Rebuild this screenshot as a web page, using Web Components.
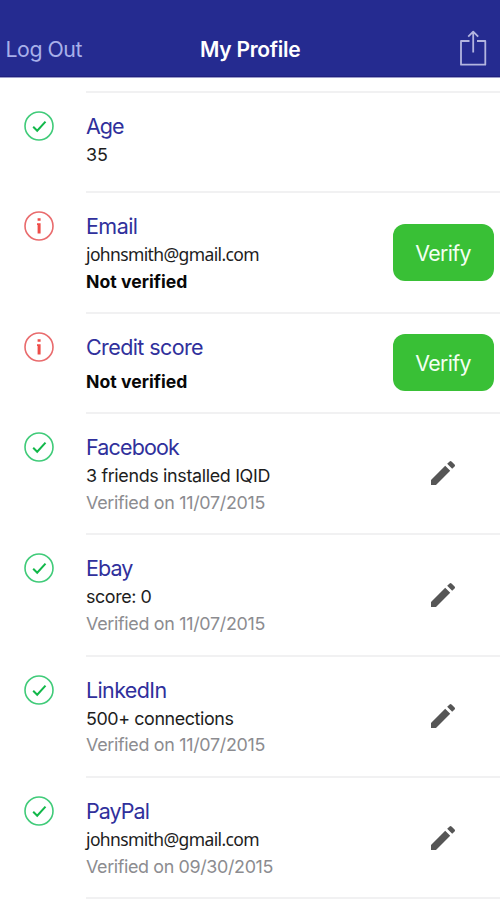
<!DOCTYPE html>
<html lang="en">
<head>
<meta charset="utf-8">
<title>My Profile</title>
<style>
  html, body { margin: 0; background: #fff; }
  body { width: 500px; height: 900px; overflow: hidden; font-family: Inter, "Liberation Sans", sans-serif; }
</style>
</head>
<body>
<profile-app></profile-app>
<script>
const labels = [];
const define = (name, html, setup) => {
  const template = document.createElement('template');
  template.innerHTML = html.trim();
  customElements.define(name, class extends HTMLElement {
    connectedCallback() {
      if (this.shadowRoot) return;
      this.attachShadow({ mode: 'open' }).append(template.content.cloneNode(true));
      if (setup) setup(this, this.shadowRoot);
    }
  });
};

/* Label whose tracking is adjusted so that it fills a given width. */
define('tracked-label', `<style>:host { display: block; width: max-content; white-space: nowrap; }</style><slot></slot>`,
  (host) => labels.push(host));

const fitLabels = () => {
  for (const el of labels) {
    const target = parseFloat(el.getAttribute('width'));
    const natural = el.getBoundingClientRect().width;
    const spacing = (target - natural) / el.textContent.length;
    if (Math.abs(spacing) < 1.5) el.style.letterSpacing = spacing.toFixed(3) + 'px';
  }
};

define('status-icon', `
  <style>:host { display: block; width: 32px; height: 32px; } svg { display: block; }
    .info { display: none; }
    :host([kind="info"]) .info { display: block; }
    :host([kind="info"]) .ok { display: none; }</style>
  <svg class="ok" width="32" height="32" viewBox="0 0 32 32" fill="none">
    <circle cx="16" cy="16" r="14" stroke="#40cb79" stroke-width="1.6"/>
    <path d="M10.2 16.8l4 3.9 8.3-9.1" stroke="#12b84a" stroke-width="2"/>
  </svg>
  <svg class="info" width="32" height="32" viewBox="0 0 32 32" fill="none">
    <circle cx="16" cy="16" r="14" stroke="#e96b6d" stroke-width="1.6"/>
    <path d="M14.6 8.2h3v2.6h-3zM14 13.3h3.6v10.1h-3v-8.4h-.6z" fill="#ee4d49"/>
  </svg>`);

define('edit-icon', `
  <style>:host { display: block; width: 32px; height: 32px; } svg { display: block; }</style>
  <svg width="32" height="32" viewBox="0 0 24 24" fill="#565656">
    <path d="M3 17.25V21h3.75L17.4 10.35l-3.75-3.75L3 17.25zM20.71 7.04a1 1 0 0 0 0-1.41l-2.34-2.34a1 1 0 0 0-1.41 0l-1.83 1.83 3.75 3.75 1.83-1.83z"/>
  </svg>`);

define('verify-button', `
  <style>
    :host { display: block; }
    button { display: flex; align-items: center; justify-content: center; width: 101px; height: 57px;
      border: 0; border-radius: 12px; padding: 1px 0 0; background: #39c036; color: #f3fff2; font: 400 21.3px/28px Inter, sans-serif; }
  </style>
  <button><tracked-label width="55.5">Verify</tracked-label></button>`);

define('nav-bar', `
  <style>
    :host { display: grid; grid-template-columns: 1fr auto 1fr; align-items: center; box-sizing: border-box;
      height: 77px; padding: 21px 13px 0 5.5px; background: #252b90; border-bottom: 1px solid #20207e; color: #fff;
      box-shadow: 0 1px 0 #9a9cca; }
    .out { color: #a8b0ea; font-size: 21.3px; padding-top: 1px; }
    .title { font-size: 21px; font-weight: 600; padding: 1px 0 0 8px; }
    svg { justify-self: end; display: block; margin-top: -1px; }
  </style>
  <tracked-label class="out" width="76.5">Log Out</tracked-label>
  <tracked-label class="title" width="108.5">My Profile</tracked-label>
  <svg width="28" height="38" viewBox="0 0 28 38" fill="none" stroke="#b3b5df" stroke-width="1.8" stroke-linejoin="round">
    <path d="M10.5 12H2v23.7h24.3V12h-8.3M14.2 23.5V3M9.2 7.7l5-5 5 5"/>
  </svg>`);

define('profile-row', `
  <style>
    :host { display: grid; grid-template-columns: 86px 1fr auto; box-sizing: border-box; height: var(--h, 121.45px); }
    status-icon { margin: 19.2px 0 0 22.8px; }
    .text { border-top: 2px solid #f1f1f2; padding: 18.2px 0 0 0; }
    .side { border-top: 2px solid #f1f1f2; display: flex; align-items: center; justify-content: center; }
    ::slotted([slot="title"]) { font-size: 21.5px; line-height: 30px; color: #30309c; }
    ::slotted([slot="body"]) { font-size: 17.9px; line-height: 27.8px; color: #1d1d1d; }
    ::slotted([slot="note"]) { font-size: 17.9px; line-height: 26.4px; color: #8c8c90; }
    ::slotted(.strong) { font-weight: 700; font-size: 17.6px !important; color: #080808; }
    ::slotted(.mail) { font-family: "Noto Sans", sans-serif; font-size: 17.5px !important; }
    ::slotted(.apart) { margin-top: 7px; }
    ::slotted(verify-button) { margin-right: 6.5px; }
    ::slotted(edit-icon) { margin-right: 41px; }
  </style>
  <status-icon></status-icon>
  <div class="text"><slot name="title"></slot><slot name="body"></slot><slot name="note"></slot></div>
  <div class="side"><slot name="action"></slot></div>`,
  (host, root) => {
    root.querySelector('status-icon').setAttribute('kind', host.getAttribute('status') || 'ok');
  });

define('profile-app', `
  <style>
    :host { display: block; width: 500px; height: 900px; overflow: hidden; background: #fff; }
    main { display: block; padding-top: 14px; }
    .short { --h: 99.6px; }
    .end { height: 2px; margin-left: 86px; background: #f1f1f2; }
  </style>
  <nav-bar></nav-bar>
  <main>
    <profile-row class="short">
      <tracked-label slot="title" width="37.5">Age</tracked-label>
      <tracked-label slot="body" width="22">35</tracked-label>
    </profile-row>
    <profile-row status="info">
      <tracked-label slot="title" width="51.5">Email</tracked-label>
      <tracked-label slot="body" class="mail" width="173">johnsmith@gmail.com</tracked-label>
      <tracked-label slot="note" class="strong" width="101.5">Not verified</tracked-label>
      <verify-button slot="action"></verify-button>
    </profile-row>
    <profile-row class="short" status="info">
      <tracked-label slot="title" width="117">Credit score</tracked-label>
      <tracked-label slot="note" class="strong apart" width="101.5">Not verified</tracked-label>
      <verify-button slot="action"></verify-button>
    </profile-row>
    <profile-row>
      <tracked-label slot="title" width="93">Facebook</tracked-label>
      <tracked-label slot="body" width="184">3 friends installed IQID</tracked-label>
      <tracked-label slot="note" width="179">Verified on 11/07/2015</tracked-label>
      <edit-icon slot="action"></edit-icon>
    </profile-row>
    <profile-row>
      <tracked-label slot="title" width="46.5">Ebay</tracked-label>
      <tracked-label slot="body" width="65.5">score: 0</tracked-label>
      <tracked-label slot="note" width="179">Verified on 11/07/2015</tracked-label>
      <edit-icon slot="action"></edit-icon>
    </profile-row>
    <profile-row>
      <tracked-label slot="title" width="80.5">LinkedIn</tracked-label>
      <tracked-label slot="body" width="147.5">500+ connections</tracked-label>
      <tracked-label slot="note" width="179">Verified on 11/07/2015</tracked-label>
      <edit-icon slot="action"></edit-icon>
    </profile-row>
    <profile-row>
      <tracked-label slot="title" width="63">PayPal</tracked-label>
      <tracked-label slot="body" class="mail" width="173">johnsmith@gmail.com</tracked-label>
      <tracked-label slot="note" width="187">Verified on 09/30/2015</tracked-label>
      <edit-icon slot="action"></edit-icon>
    </profile-row>
    <div class="end"></div>
  </main>`);

fitLabels();
</script>
</body>
</html>
